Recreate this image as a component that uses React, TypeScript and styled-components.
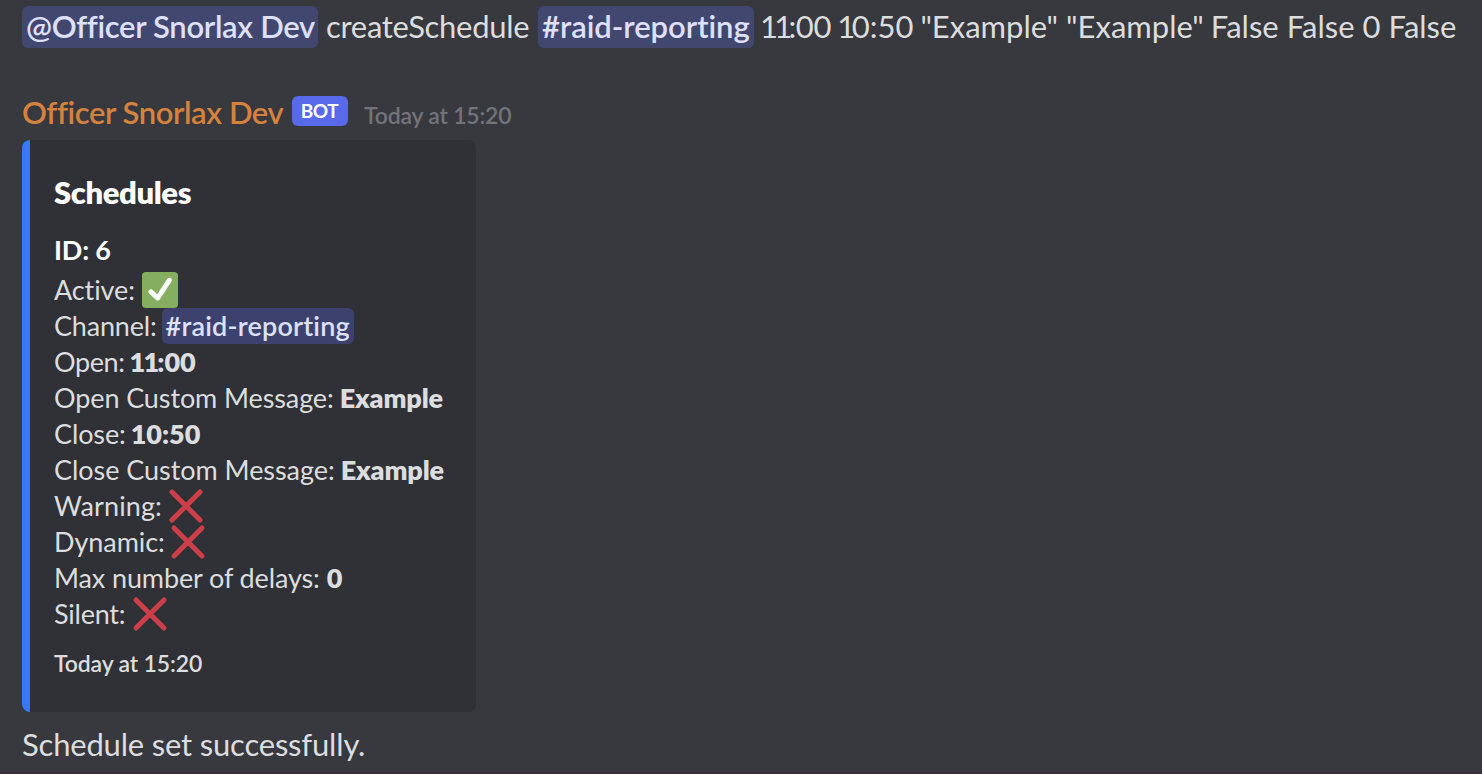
import React from 'react';
import styled, { createGlobalStyle } from 'styled-components';

const GlobalStyle = createGlobalStyle`
  * { box-sizing: border-box; }
  html, body, #root { height: 100%; }
  body {
    margin: 0;
    overflow: hidden;
    background: #38393e;
    color: #dcddde;
    font-family: Lato, "Open Sans", sans-serif;
    font-variant-ligatures: none;
  }
`;

const Chat = styled.main`
  height: 774px;
  padding: 6px 0 0 22px;
  border-bottom: 3px solid #3a313c;
  white-space: nowrap;
`;

const MessageLine = styled.div`
  display: flex;
  height: 42px;
  font-size: 31px;
  line-height: 41px;
`;

const Run = styled.span<{ $track?: number; $gap?: number }>`
  letter-spacing: ${(p) => p.$track ?? 0}px;
  margin-left: ${(p) => p.$gap ?? 0}px;
`;

const Ones = styled.span<{ $track: number }>`
  letter-spacing: ${(p) => p.$track}px;
`;

const Mention = styled.span<{ $width: number; $inEmbed?: boolean; $track?: number; $gap?: number }>`
  display: inline-block;
  width: ${(p) => p.$width}px;
  height: ${(p) => (p.$inEmbed ? 36 : 42)}px;
  margin-left: ${(p) => p.$gap ?? 0}px;
  padding-left: 4px;
  border-radius: 6px;
  background: ${(p) => (p.$inEmbed ? '#3c426d' : '#424770')};
  color: #dee0fc;
  font-weight: 600;
  letter-spacing: ${(p) => p.$track ?? 0}px;
`;

const Header = styled.header`
  display: flex;
  align-items: baseline;
  height: 32px;
  margin: 48px 0 12px;
`;

const Author = styled.span`
  width: 270px;
  color: #d5823f;
  font-size: 31px;
  font-weight: 600;
  line-height: 32px;
  letter-spacing: -0.43px;
`;

const BotTag = styled.span`
  align-self: flex-start;
  width: 56px;
  height: 30px;
  padding-right: 1px;
  border-radius: 6px;
  background: #586aea;
  color: #fff;
  font-size: 19px;
  font-weight: 700;
  line-height: 30px;
  letter-spacing: -0.4px;
  text-align: center;
`;

const Timestamp = styled.time`
  margin-left: 16px;
  color: #72747a;
  font-size: 23px;
  font-weight: 600;
  line-height: 32px;
  letter-spacing: -0.2px;
`;

const Embed = styled.article`
  width: 454px;
  height: 572px;
  padding: 32px 24px 0;
  border-left: 8px solid #3579f6;
  border-radius: 8px;
  background: #303136;
`;

const Title = styled.h2`
  margin: 0 0 20px;
  color: #fff;
  font-size: 31px;
  font-weight: 800;
  line-height: 40px;
  letter-spacing: -0.4px;
`;

const FieldName = styled.h3`
  margin: 0 0 4px;
  color: #fff;
  font-size: 27px;
  font-weight: 700;
  line-height: 36px;
  letter-spacing: -0.2px;
`;

const Field = styled.div`
  display: flex;
  height: 36px;
  font-size: 27px;
  line-height: 36px;
`;

const Value = styled.strong<{ $track?: number; $gap?: number }>`
  margin-left: ${(p) => p.$gap ?? 6}px;
  font-weight: 800;
  letter-spacing: ${(p) => p.$track ?? 0}px;
`;

const Emoji = styled.svg<{ $gap: number }>`
  flex: none;
  width: 36px;
  height: 36px;
  margin-left: ${(p) => p.$gap}px;
`;

const Footer = styled.footer`
  margin-top: 15px;
  font-size: 23px;
  font-weight: 600;
  line-height: 32px;
  letter-spacing: -0.15px;
`;

const Result = styled.p`
  margin: 10px 0 0;
  font-size: 31px;
  line-height: 45px;
  letter-spacing: -0.19px;
`;

const Check = ({ gap }: { gap: number }) => (
  <Emoji viewBox="0 0 36 36" $gap={gap} aria-label="yes">
    <rect width="36" height="36" rx="4" fill="#85ae60" />
    <path
      fill="#fff"
      d="M28.738 6.107c-1.158-.752-2.707-.419-3.458.736L15.292 22.221l-4.694-4.34c-1.014-.937-2.596-.875-3.533.138-.937 1.014-.875 2.596.139 3.533l6.9 6.38c.488.452 1.094.676 1.697.676.67 0 1.477-.282 2.013-1.068.17-.259 11.661-17.975 11.661-17.975.751-1.154.421-2.703-.737-3.454z"
    />
  </Emoji>
);

const Cross = ({ gap }: { gap: number }) => (
  <Emoji viewBox="0 0 36 36" $gap={gap} aria-label="no">
    <path d="M4 4 32 32M32 4 4 32" stroke="#cc3e48" strokeWidth="5" strokeLinecap="round" />
  </Emoji>
);

export default function App() {
  return (
    <>
      <GlobalStyle />
      <Chat>
        <MessageLine>
          <Mention $width={296} $track={-0.33}>@Officer Snorlax Dev</Mention>
          <Run $gap={8} $track={-0.3}>createSchedule</Run>
          <Mention $width={216} $gap={8.7} $track={-0.03}>#raid-reporting</Mention>
          <Run $gap={6} $track={-0.3}><Ones $track={-3.8}>11</Ones>:00</Run>
          <Run $gap={6}><Ones $track={-3.5}>1</Ones>0:50</Run>
          <Run $gap={7}>"Example"</Run>
          <Run $gap={8}>"Example"</Run>
          <Run $gap={7}>False</Run>
          <Run $gap={8}>False</Run>
          <Run $gap={8}>0</Run>
          <Run $gap={8}>False</Run>
        </MessageLine>

        <Header>
          <Author>Officer Snorlax Dev</Author>
          <BotTag>BOT</BotTag>
          <Timestamp>Today at 15:20</Timestamp>
        </Header>

        <Embed>
          <Title>Schedules</Title>
          <FieldName>ID: 6</FieldName>
          <Field><Run $track={-0.1}>Active:</Run><Check gap={7} /></Field>
          <Field><Run $track={-0.18}>Channel:</Run><Mention $inEmbed $width={192} $gap={5} $track={0.2}>#raid-reporting</Mention></Field>
          <Field><Run $track={-0.4}>Open:</Run><Value $gap={5}><Ones $track={-1.8}>11</Ones>:00</Value></Field>
          <Field><Run $track={-0.11}>Open Custom Message:</Run><Value $track={-0.12}>Example</Value></Field>
          <Field><Run $track={-0.13}>Close:</Run><Value $gap={5}>10:50</Value></Field>
          <Field><Run $track={-0.05}>Close Custom Message:</Run><Value $track={-0.12}>Example</Value></Field>
          <Field><Run $track={0.1}>Warning:</Run><Cross gap={6} /></Field>
          <Field><Run $track={-0.05}>Dynamic:</Run><Cross gap={5} /></Field>
          <Field><Run $track={-0.12}>Max number of delays:</Run><Value $gap={7}>0</Value></Field>
          <Field><Run $track={-0.25}>Silent:</Run><Cross gap={7} /></Field>
          <Footer>Today at 15:20</Footer>
        </Embed>

        <Result>Schedule set successfully.</Result>
      </Chat>
    </>
  );
}
